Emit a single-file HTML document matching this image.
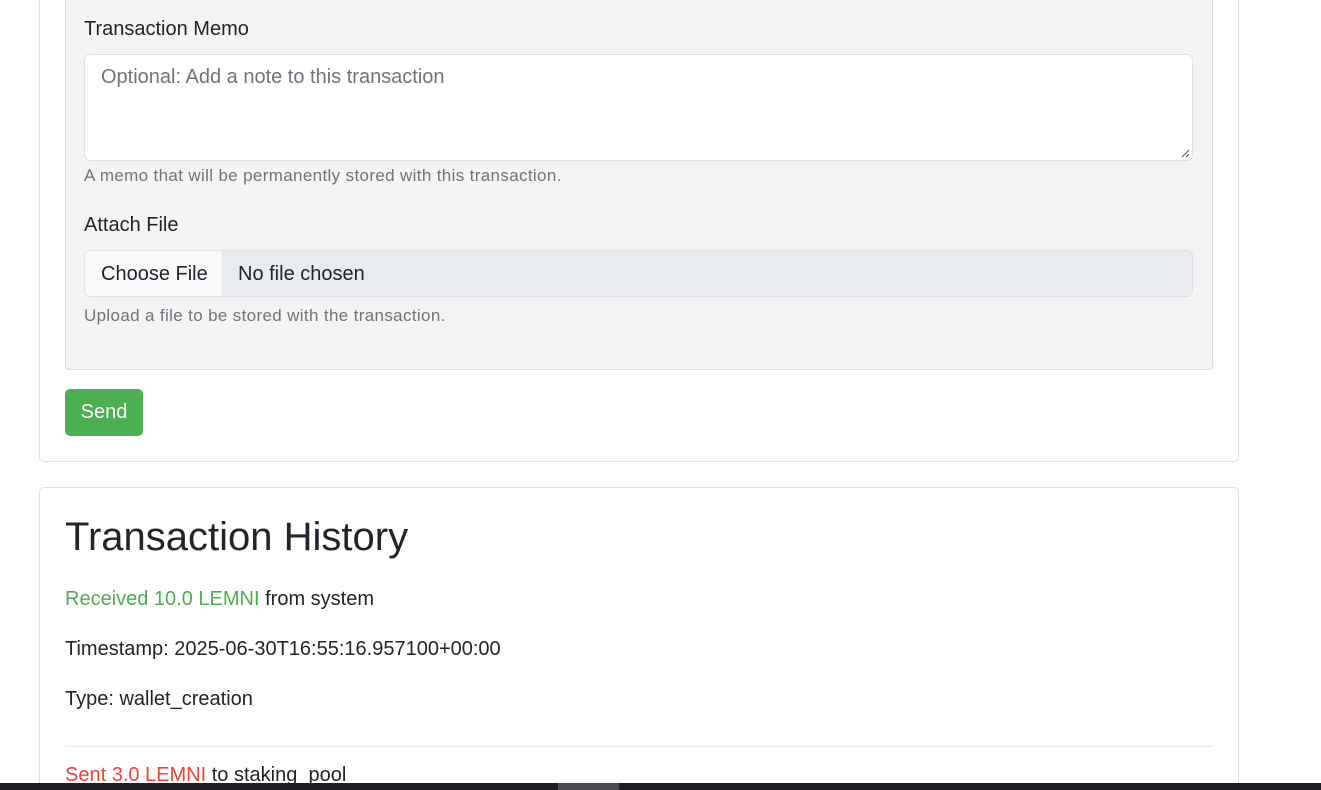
<!DOCTYPE html>
<html><head><style>
*{box-sizing:border-box;margin:0;padding:0}
html,body{width:1321px;height:790px;overflow:hidden}
body{background:#fff;font-family:"Liberation Sans",Arial,sans-serif;color:#212529;position:relative}
.card{position:absolute;left:39px;width:1200px;border:1px solid #dee2e6;border-radius:5px;background:#fff}
.gray{position:absolute;left:65px;top:-10px;width:1148px;height:380px;background:#f4f4f4;border:1px solid #dcdcdc;border-radius:4px}
.abs{position:absolute;white-space:nowrap}
.lbl{font-size:20px;color:#212529}
.help{font-size:17px;letter-spacing:0.35px;color:#6c757d}
.ta{position:absolute;left:84px;top:54px;width:1109px;height:107px;background:#fff;border:1px solid #dee2e6;border-radius:6px}
.file{position:absolute;left:84px;top:250px;width:1109px;height:47px;background:#e9ecef;border:1px solid #dee2e6;border-radius:6px;overflow:hidden}
.btn{position:absolute;left:0;top:0;width:138px;height:100%;background:#f8f9fa;border-right:1px solid #dee2e6}
.send{position:absolute;left:65px;top:389px;width:78px;height:47px;background:#4caf50;border-radius:5px;color:#fff;font-size:20px;text-align:center;line-height:47px}
.t{font-size:20px}
</style></head><body>
<div class="card" style="top:-20px;height:482px"></div>
<div class="gray"></div>
<div class="abs lbl" style="left:84px;top:18px">Transaction Memo</div>
<div class="ta"></div>
<div class="abs" style="left:101px;top:66px;font-size:20px;color:#6c757d">Optional: Add a note to this transaction</div>
<svg class="abs" style="left:1180px;top:148px" width="10" height="10"><path d="M9 2L2 9M9 6L6 9" stroke="#555" stroke-width="1"/></svg>
<div class="abs help" style="left:84px;top:166px">A memo that will be permanently stored with this transaction.</div>
<div class="abs lbl" style="left:84px;top:214px">Attach File</div>
<div class="file"><div class="btn"></div></div>
<div class="abs t" style="left:101px;top:263px">Choose File</div>
<div class="abs t" style="left:238px;top:263px">No file chosen</div>
<div class="abs help" style="left:84px;top:306px">Upload a file to be stored with the transaction.</div>
<div class="send">Send</div>
<div class="card" style="top:487px;height:320px"></div>
<div class="abs" style="left:65px;top:515px;font-size:40px;color:#212529">Transaction History</div>
<div class="abs t" style="left:65px;top:588px"><span style="color:#4caf50">Received 10.0 LEMNI</span> from system</div>
<div class="abs t" style="left:65px;top:638px">Timestamp: 2025-06-30T16:55:16.957100+00:00</div>
<div class="abs t" style="left:65px;top:688px">Type: wallet_creation</div>
<div class="abs" style="left:65px;top:746px;width:1148px;height:1px;background:#e9e9e9"></div>
<div class="abs t" style="left:65px;top:764px"><span style="color:#f44336">Sent 3.0 LEMNI</span> to staking_pool</div>
<div class="abs" style="left:0;top:783px;width:1321px;height:7px;background:#1f1f23"></div>
<div class="abs" style="left:558px;top:783px;width:61px;height:7px;background:#4a4a4f"></div>
</body></html>
